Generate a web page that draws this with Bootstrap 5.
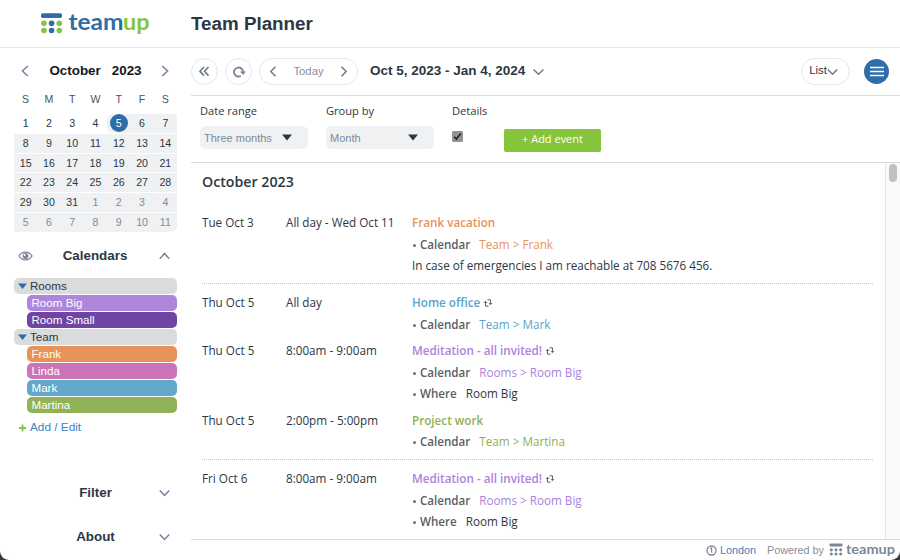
<!DOCTYPE html>
<html lang="en">
<head>
<meta charset="utf-8">
<meta name="viewport" content="width=device-width, initial-scale=1">
<title>Team Planner</title>
<link href="https://cdn.jsdelivr.net/npm/bootstrap@5.3.0/dist/css/bootstrap.min.css" rel="stylesheet">
<style>
html{background:#3a3a3a}
body{background:#3a3a3a;font-family:"Liberation Sans",Arial,sans-serif;font-size:11.4px;line-height:1;color:#2b3843;height:560px;overflow:hidden}
svg{display:block;flex:none}
.planner{width:900px;height:560px;background:#fff;border-radius:0 0 9px 9px;overflow:hidden}
.topbar{height:48px;border-bottom:1px solid #e9e9ea}
.brand{width:191px;padding:3px 0 0 40px}
.topbar h1{font-size:18.8px;font-weight:700;line-height:1;margin:15px 0 0}
.side{width:177px;padding-left:14px;margin-right:14px}
.month-head{height:45px;padding:0 6px 0 6px}
.month-head .caption{font-size:13.4px;font-weight:700;color:#14181c;gap:11px}
.week{display:grid;grid-template-columns:repeat(7,1fr);text-align:center;font-size:10.6px;color:#2b3843}
.week span{height:18.8px;line-height:19.6px;margin-bottom:1px;background:#eff1f3}
.week .dow{background:none;height:20px;line-height:13px;color:#4a5560}
.week .past{background:none}
.week .other{color:#828d9c}
.week .today{border-radius:6px 0 0 6px}
.week .today b{display:block;width:18px;height:18px;line-height:19px;border-radius:50%;background:#2e6da8;color:#fff;font-weight:400;margin:0 auto}
.week .last{border-radius:0 0 6px 0}
.sec{height:20px;padding:0 7px 0 4px;margin-top:13px}
.sec h2{font-size:13.4px;font-weight:700;line-height:1;margin:0 2px 0 0}
.folded{margin-top:24px;padding-left:20px}
.folded svg{margin-top:1px}
.cals{gap:1px;padding-top:12px}
.cals div{height:16px;line-height:16px;border-radius:5px;font-size:11.6px;color:#fff;margin-left:13px;padding-left:4.5px}
.cals .folder{background:#d9dbdc;color:#2b3843;margin-left:0;padding-left:4px;display:flex;align-items:center;gap:3px}
.folder svg{margin-top:1px}
.big{background:#ae87dd}.small-room{background:#7044a3}.frank{background:#e79259}.linda{background:#cb75b8}.mark-cal{background:#62a8cb}.martina{background:#92b257}
.add{font-size:11.8px;color:#3d83c6;padding:9px 0 25px 5px;gap:4px}
.pane{width:709px}
.tools{height:48px;border-bottom:1px solid #d9dadb;padding-right:11px}
.pill{border:1px solid #e4e6ee;border-radius:14px;height:27px;display:flex;align-items:center;justify-content:center;font-size:11.3px;margin-right:7px}
.round{width:27px}
.today-nav{width:99px;color:#868f9f;margin-right:12px}
.view{width:49px;margin-right:14px;padding:0 4px 1px 0}
.view svg{margin-top:1px}
.range{font-size:13.5px;font-weight:700;margin-bottom:2px}
.burger{width:25px;height:25px;border-radius:50%;background:#2e6da8}
.opts{height:67px;border-bottom:1px solid #d9dadb;padding:9px 0 0 9px;font-family:"Open Sans",sans-serif}
.opts label{display:block;font-size:11.1px;line-height:12px;margin-bottom:9px}
.field{margin-right:18px}
.details{width:52px}
.pick{width:108px;height:23px;border-radius:6px;background:#eff1f3;color:#7f8998;font:11px/24px "Liberation Sans",sans-serif;padding:0 16px 0 4px}
.tick{width:11px;height:11px;border-radius:1.5px;background:#929292;margin-top:14px}
.addbtn{width:97px;height:23px;border-radius:2px;background:#86c53b;color:#fff;font-size:11px;line-height:20px;text-align:center;margin-top:24px}
.list{height:376px;font-family:"Open Sans",sans-serif;font-size:11.7px}
.list h3{font-size:14.2px;font-weight:600;line-height:20px;margin:9px 0 0;padding-bottom:20.3px}
.agenda{width:671px;margin-left:11px;overflow:hidden}
.day{border-bottom:1px dotted #bfc3c7;padding:0 0 1.4px;margin-bottom:8.1px}
.day:last-child{border-bottom:0}
.ev{display:grid;grid-template-columns:84px 126px 1fr;line-height:21.5px;padding-bottom:5px}
.ev>*{white-space:nowrap}
.ev p{margin:0;display:flex;align-items:center;height:21.5px}
.ev .title{font-weight:600;gap:3px}
.ev .attr{font-weight:600;font-size:11.6px;color:#5a5f64;margin-right:9px;display:flex;align-items:center}
.ev .attr::before{content:"";width:3px;height:3px;border-radius:50%;margin:1px 4px 0 1px;background:#6a6f74}
.t-frank{color:#e79259}.t-mark{color:#5aa3c8}.t-big{color:#ae82dc}.t-martina{color:#8fb155}
.track{width:15px;border-left:1px solid #e3e3e3;background:#fafafa;padding:1px 0 0 3px}
.track i{display:block;width:8px;height:18px;border-radius:4px;background:#c1c1c1}
.foot{height:21px;border-top:1px solid #d9dadb;font-size:10.8px;color:#868f9b;padding-right:4px}
.foot .zone{color:#3d83c6;margin:0 11px 0 3px}
</style>
<script src="https://cdn.jsdelivr.net/npm/bootstrap@5.3.0/dist/js/bootstrap.bundle.min.js"></script>
</head>
<body>
<svg width="0" height="0" class="position-absolute">
<symbol id="repeat" viewBox="0 0 10 10"><path d="M4.500 1.800H7.500V6.200M5.800 5 7.500 6.700 9.200 5M5.500 8.200H2.500V3.800M.8 5 2.500 3.300 4.200 5" fill="none" stroke="#5c6268" stroke-width="1" stroke-linejoin="round"/></symbol>
</svg>
<div class="planner d-flex flex-column">
<header class="topbar d-flex flex-none">
  <div class="brand">
    <svg width="116" height="42" viewBox="0 -8 116 42"><rect x="1" y="2.300" width="21" height="4.700" rx="1.800" fill="#2e6da8"/><g fill="#86c53b"><circle cx="3.900" cy="12.200" r="2.800"/><circle cx="3.900" cy="19.500" r="2.800"/><circle cx="19.300" cy="12.200" r="2.800"/><circle cx="19.300" cy="19.500" r="2.800"/></g><g fill="#2e6da8"><circle cx="11.600" cy="12.200" r="2.800"/><circle cx="11.600" cy="19.500" r="2.800"/></g><g font-family="Lato,sans-serif" font-weight="700" font-size="22"><text x="28.500" y="19" textLength="55" lengthAdjust="spacingAndGlyphs" fill="#2e6da8">team</text><text x="83" y="19" textLength="26.500" lengthAdjust="spacingAndGlyphs" fill="#86c53b">up</text></g></svg>
  </div>
  <h1>Team Planner</h1>
</header>
<div class="d-flex">
  <aside class="side">
    <div class="month-head d-flex align-items-center justify-content-between">
      <svg width="10" height="12" viewBox="0 0 10 12"><path d="M7.800 1 2.400 6l5.400 5" fill="none" stroke="#76839a" stroke-width="1.500"/></svg>
      <div class="caption d-flex"><span>October</span><span>2023</span></div>
      <svg width="10" height="12" viewBox="0 0 10 12"><path d="M1.200 1 6.600 6l-5.400 5" fill="none" stroke="#76839a" stroke-width="1.500"/></svg>
    </div>
    <div class="week">
      <span class="dow">S</span><span class="dow">M</span><span class="dow">T</span><span class="dow">W</span><span class="dow">T</span><span class="dow">F</span><span class="dow">S</span>
      <span class="past">1</span><span class="past">2</span><span class="past">3</span><span class="past">4</span><span class="today"><b>5</b></span><span>6</span><span>7</span>
      <span>8</span><span>9</span><span>10</span><span>11</span><span>12</span><span>13</span><span>14</span>
      <span>15</span><span>16</span><span>17</span><span>18</span><span>19</span><span>20</span><span>21</span>
      <span>22</span><span>23</span><span>24</span><span>25</span><span>26</span><span>27</span><span>28</span>
      <span>29</span><span>30</span><span>31</span><span class="other">1</span><span class="other">2</span><span class="other">3</span><span class="other">4</span>
      <span class="other">5</span><span class="other">6</span><span class="other">7</span><span class="other">8</span><span class="other">9</span><span class="other">10</span><span class="other last">11</span>
    </div>
    <div class="sec d-flex align-items-center justify-content-between">
      <svg width="15" height="10" viewBox="0 0 15 10"><path d="M1 5C4-.2 11-.2 14 5 11 10.200 4 10.200 1 5Z" fill="none" stroke="#7c8798" stroke-width="1.300"/><circle cx="7.500" cy="5" r="2.900" fill="#7c8798"/><circle cx="6.600" cy="4" r="1" fill="#fff"/></svg>
      <h2>Calendars</h2>
      <svg width="11" height="8" viewBox="0 0 11 8"><path d="M.8 6.800 5.500 1.500l4.700 5.300" fill="none" stroke="#76839a" stroke-width="1.500"/></svg>
    </div>
    <div class="cals d-flex flex-column">
      <div class="folder"><svg width="9" height="6" viewBox="0 0 9 6"><path d="M0 .5h9L4.500 6z" fill="#2e6da8"/></svg>Rooms</div>
      <div class="big">Room Big</div>
      <div class="small-room">Room Small</div>
      <div class="folder"><svg width="9" height="6" viewBox="0 0 9 6"><path d="M0 .5h9L4.500 6z" fill="#2e6da8"/></svg>Team</div>
      <div class="frank">Frank</div>
      <div class="linda">Linda</div>
      <div class="mark-cal">Mark</div>
      <div class="martina">Martina</div>
    </div>
    <div class="add d-flex align-items-center"><svg width="7" height="8" viewBox="0 0 7 8"><path d="M3.500.5v7M0 4h7" stroke="#86c53b" stroke-width="1.800"/></svg>Add / Edit</div>
    <div class="sec folded d-flex align-items-center justify-content-between"><span></span><h2>Filter</h2><svg width="11" height="8" viewBox="0 0 11 8"><path d="M.8 1.500 5.500 6.500l4.700-5" fill="none" stroke="#76839a" stroke-width="1.500"/></svg></div>
    <div class="sec folded d-flex align-items-center justify-content-between"><span></span><h2>About</h2><svg width="11" height="8" viewBox="0 0 11 8"><path d="M.8 1.500 5.500 6.500l4.700-5" fill="none" stroke="#76839a" stroke-width="1.500"/></svg></div>
  </aside>
  <main class="pane">
    <div class="tools d-flex align-items-center">
      <div class="pill round"><svg width="11" height="11" viewBox="0 0 11 11"><path d="M5 1 1 5.300l4 4.300M9.500 1 5.500 5.300l4 4.300" fill="none" stroke="#6c788c" stroke-width="1.600"/></svg></div>
      <div class="pill round"><svg width="14" height="12" viewBox="0 0 14 12"><path d="M8.800 9.900A4.500 4.500 0 1 1 11 6" fill="none" stroke="#7c8798" stroke-width="1.900"/><path d="M8 5.500h6L11 9z" fill="#7c8798"/></svg></div>
      <div class="pill today-nav"><svg width="8" height="11" viewBox="0 0 8 11"><path d="M6.500.8 1.800 5.500l4.700 4.700" fill="none" stroke="#6c788c" stroke-width="1.500"/></svg><span class="mx-3">Today</span><svg width="8" height="11" viewBox="0 0 8 11"><path d="M1.500.8 6.200 5.500 1.500 10.200" fill="none" stroke="#6c788c" stroke-width="1.500"/></svg></div>
      <div class="range">Oct 5, 2023 - Jan 4, 2024</div>
      <svg class="ms-2" width="11" height="8" viewBox="0 0 11 8"><path d="M.5 1.500 5.500 6.300l5-4.800" fill="none" stroke="#6c788c" stroke-width="1.500"/></svg>
      <div class="pill view ms-auto">List<svg width="11" height="8" viewBox="0 0 11 8"><path d="M.8 1.500 5.500 6.300l4.700-4.800" fill="none" stroke="#6c788c" stroke-width="1.500"/></svg></div>
      <div class="burger d-flex align-items-center justify-content-center"><svg width="14" height="11" viewBox="0 0 14 11"><path d="M0 1.500h14M0 5.500h14M0 9.500h14" stroke="#fff" stroke-width="1.500"/></svg></div>
    </div>
    <div class="opts d-flex">
      <div class="field"><label>Date range</label><div class="pick d-flex align-items-center justify-content-between">Three months<svg width="10" height="7" viewBox="0 0 10 7"><path d="M0 .5h10L5 6.500z" fill="#2b3843"/></svg></div></div>
      <div class="field"><label>Group by</label><div class="pick d-flex align-items-center justify-content-between">Month<svg width="10" height="7" viewBox="0 0 10 7"><path d="M0 .5h10L5 6.500z" fill="#2b3843"/></svg></div></div>
      <div class="details"><label>Details</label><div class="tick"><svg width="11" height="11" viewBox="0 0 11 11"><path d="M2.300 5.700 4.400 8 8.800 2.500" fill="none" stroke="#222" stroke-width="1.600"/></svg></div></div>
      <div class="addbtn">+ Add event</div>
    </div>
    <div class="list d-flex">
      <div class="agenda">
        <h3>October 2023</h3>
        <section class="day">
          <div class="ev"><span>Tue Oct 3</span><span>All day - Wed Oct 11</span><div><p class="title t-frank">Frank vacation</p><p><span class="attr">Calendar</span><span class="t-frank">Team &gt; Frank</span></p><p>In case of emergencies I am reachable at 708 5676 456.</p></div></div>
        </section>
        <section class="day">
          <div class="ev"><span>Thu Oct 5</span><span>All day</span><div><p class="title t-mark">Home office<svg width="10" height="10"><use href="#repeat"/></svg></p><p><span class="attr">Calendar</span><span class="t-mark">Team &gt; Mark</span></p></div></div>
          <div class="ev"><span>Thu Oct 5</span><span>8:00am - 9:00am</span><div><p class="title t-big">Meditation - all invited!<svg width="10" height="10"><use href="#repeat"/></svg></p><p><span class="attr">Calendar</span><span class="t-big">Rooms &gt; Room Big</span></p><p><span class="attr">Where</span>Room Big</p></div></div>
          <div class="ev"><span>Thu Oct 5</span><span>2:00pm - 5:00pm</span><div><p class="title t-martina">Project work</p><p><span class="attr">Calendar</span><span class="t-martina">Team &gt; Martina</span></p></div></div>
        </section>
        <section class="day">
          <div class="ev"><span>Fri Oct 6</span><span>8:00am - 9:00am</span><div><p class="title t-big">Meditation - all invited!<svg width="10" height="10"><use href="#repeat"/></svg></p><p><span class="attr">Calendar</span><span class="t-big">Rooms &gt; Room Big</span></p><p><span class="attr">Where</span>Room Big</p></div></div>
        </section>
      </div>
      <div class="track ms-auto"><i></i></div>
    </div>
    <footer class="foot d-flex align-items-center justify-content-end">
      <svg width="11" height="11" viewBox="0 0 11 11"><circle cx="5.500" cy="5.500" r="4.500" fill="none" stroke="#7c8798" stroke-width="1.300"/><path d="M4.200 3.800 5.600 3V7.500" fill="none" stroke="#7c8798" stroke-width="1.200"/></svg>
      <span class="zone">London</span><span>Powered by</span>
      <svg class="ms-1" width="68" height="18" viewBox="0 0 68 18"><g fill="#7c8798"><rect x="1.500" y="2.500" width="13" height="3" rx="1"/><circle cx="3.300" cy="8.800" r="1.600"/><circle cx="8" cy="8.800" r="1.600"/><circle cx="12.700" cy="8.800" r="1.600"/><circle cx="3.300" cy="13" r="1.600"/><circle cx="8" cy="13" r="1.600"/><circle cx="12.700" cy="13" r="1.600"/><text x="18" y="12.800" font-family="Lato,sans-serif" font-weight="700" font-size="13.500" textLength="49" lengthAdjust="spacingAndGlyphs">teamup</text></g></svg>
    </footer>
  </main>
</div>
</div>
</body>
</html>
